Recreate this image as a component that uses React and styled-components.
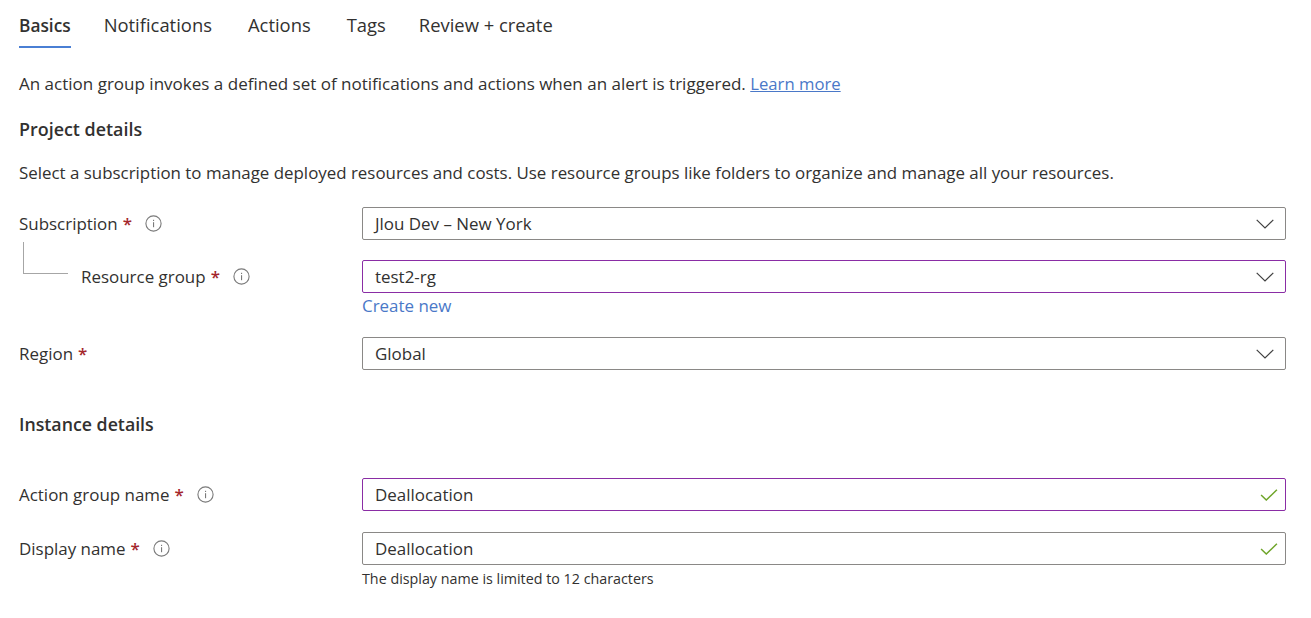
import React from 'react'
import styled, { createGlobalStyle } from 'styled-components'

const GlobalStyle = createGlobalStyle`
  html, body {
    margin: 0;
    background: #fff;
  }
  body {
    font-family: "Open Sans", "Noto Sans", "Liberation Sans", sans-serif;
    font-size: 16.95px;
    color: #323130;
  }
`

function InfoIcon() {
  return (
    <InfoSvg viewBox="0 0 17 17">
      <circle cx="8.5" cy="8.5" r="7.6" fill="none" stroke="#7a7a7a" strokeWidth="1.1" />
      <rect x="8" y="7.2" width="1.1" height="5" fill="#7a7a7a" />
      <rect x="8" y="4.8" width="1.1" height="1.2" fill="#7a7a7a" />
    </InfoSvg>
  )
}

function Chevron() {
  return (
    <ChevronSvg viewBox="0 0 18 10">
      <path d="M0.7 0.9 L9 9 L17.3 0.9" fill="none" stroke="#404040" strokeWidth="1.2" />
    </ChevronSvg>
  )
}

function Check() {
  return (
    <CheckSvg viewBox="0 0 17 12">
      <path d="M0.6 6 L5.8 11 L16.4 0.8" fill="none" stroke="#6fa52a" strokeWidth="1.5" />
    </CheckSvg>
  )
}

function Field({ label, info = true, nested, value, active, icon, children, gap }) {
  return (
    <Row $gap={gap}>
      <LabelCell>
        {nested && <Connector />}
        <span>{label}</span>
        <Star>*</Star>
        {info && <InfoIcon />}
      </LabelCell>
      <div>
        <Control $active={active}>
          <span>{value}</span>
          {icon === 'check' ? <Check /> : <Chevron />}
        </Control>
        {children}
      </div>
    </Row>
  )
}

export default function App() {
  return (
    <Page>
      <GlobalStyle />
      <Tabs>
        <Tab $selected>Basics</Tab>
        <Tab>Notifications</Tab>
        <Tab>Actions</Tab>
        <Tab>Tags</Tab>
        <Tab>Review + create</Tab>
      </Tabs>

      <Intro>
        An action group invokes a defined set of notifications and actions when an alert is triggered.{' '}
        <Link>Learn more</Link>
      </Intro>

      <SectionTitle>Project details</SectionTitle>
      <Description>
        Select a subscription to manage deployed resources and costs. Use resource groups like folders to organize and manage all your resources.
      </Description>

      <Field label="Subscription" value="Jlou Dev – New York" gap={20} />
      <Field label="Resource group" nested value="test2-rg" active gap={19}>
        <CreateLink>Create new</CreateLink>
      </Field>
      <Field label="Region" info={false} value="Global" />

      <InstanceTitle>Instance details</InstanceTitle>

      <Field label="Action group name" value="Deallocation" active icon="check" gap={21} />
      <Field label="Display name" value="Deallocation" icon="check">
        <Hint>The display name is limited to 12 characters</Hint>
      </Field>
    </Page>
  )
}

const Page = styled.div`
  padding: 0 25px 0 19px;
`

const Tabs = styled.div`
  display: flex;
  gap: 36px;
  height: 48px;
`

const Tab = styled.div`
  padding-top: ${p => (p.$selected ? 13 : 12)}px;
  line-height: 26px;
  height: 48px;
  box-sizing: border-box;
  font-size: ${p => (p.$selected ? 17.3 : 18.4)}px;
  font-weight: ${p => (p.$selected ? 600 : 400)};
  margin-right: ${p => (p.$selected ? -3 : 0)}px;
  border-bottom: 2px solid ${p => (p.$selected ? '#4a7fd4' : 'transparent')};

  &:last-child {
    margin-left: -3px;
  }
`

const Intro = styled.div`
  margin-top: 24px;
  line-height: 24px;
  font-size: 17.02px;
`

const Link = styled.span`
  color: #4a78c8;
  font-size: 16.7px;
  text-decoration: underline;
`

const SectionTitle = styled.div`
  margin-top: 21px;
  line-height: 24px;
  font-size: 17.9px;
  font-weight: 600;
`

const Description = styled.div`
  margin-top: 20px;
  margin-bottom: 22px;
  line-height: 24px;
  font-size: 16.9px;
`

const Row = styled.div`
  display: grid;
  grid-template-columns: 343px 1fr;
  margin-bottom: ${p => p.$gap || 0}px;
`

const LabelCell = styled.div`
  display: flex;
  align-items: center;
  height: 33px;
`

const Connector = styled.div`
  align-self: flex-start;
  flex: none;
  width: 45px;
  height: 32px;
  margin: -18px 13px 0 4px;
  border-left: 1px solid #a6a6a6;
  border-bottom: 1px solid #a6a6a6;
  box-sizing: border-box;
`

const Star = styled.span`
  color: #a4262c;
  margin-left: 5px;
  font-weight: 600;
`

const InfoSvg = styled.svg`
  width: 17px;
  height: 17px;
  margin-left: 13px;
`

const ChevronSvg = styled.svg`
  width: 18px;
  height: 12px;
  flex: none;
  margin-right: 3px;
`

const CheckSvg = styled.svg`
  width: 18px;
  height: 12px;
  flex: none;
  margin-right: -1px;
`

const Control = styled.div`
  display: flex;
  align-items: center;
  justify-content: space-between;
  height: 33px;
  box-sizing: border-box;
  padding: 0 8px 0 12px;
  border: 1px solid ${p => (p.$active ? '#8a2da5' : '#8a8886')};
  border-radius: 2px;
`

const CreateLink = styled.div`
  color: #4a78c8;
  line-height: 24px;
  margin-top: 1px;
`

const InstanceTitle = styled.div`
  margin-top: 42px;
  margin-bottom: 42px;
  line-height: 24px;
  font-size: 17.75px;
  font-weight: 600;
`

const Hint = styled.div`
  font-size: 14.3px;
  line-height: 18px;
  margin-top: 5px;
`
